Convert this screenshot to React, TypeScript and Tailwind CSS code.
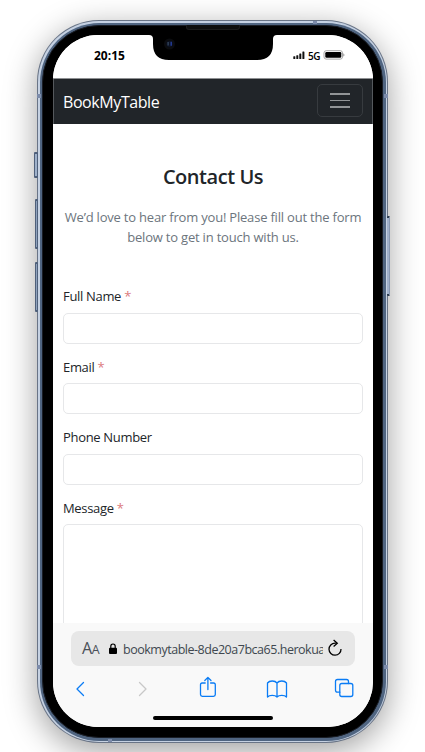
import type { ReactNode } from "react";

function Field({ label, required, tall }: { label: string; required?: boolean; tall?: boolean }) {
  return (
    <div className={tall ? "h-[180px] shrink-0" : "h-[70.6px] shrink-0"}>
      <label className="block h-[26.6px] text-[13px] leading-[20px] tracking-[-0.32px] text-[#212529]">
        {label}
        {required && <span className="text-[#dc7b7d]"> *</span>}
      </label>
      <div
        className={
          tall
            ? "h-[154px] rounded-[5px] border border-[#e6e7e9] bg-white"
            : "h-[31px] rounded-[5px] border border-[#e6e7e9] bg-white"
        }
      />
    </div>
  );
}

function StatusBar() {
  return (
    <div className="relative flex h-[44px] shrink-0 justify-between border-b border-[#8e9093] bg-white pr-[28px] pl-[41px]">
      <span className="mt-[11px] text-[12px] leading-[20px] font-bold tracking-[0px] text-black">20:15</span>
      <div className="mt-[10px] flex h-[20px] items-center">
        <svg width="13" height="9" viewBox="0 0 13 9" fill="#111">
          <rect x="0.3" y="5.3" width="2" height="2.7" rx=".5" />
          <rect x="3.3" y="4.2" width="2" height="3.8" rx=".5" />
          <rect x="6.3" y="2.5" width="2" height="5.5" rx=".5" />
          <rect x="9.4" y="0.6" width="2" height="7.4" rx=".5" />
        </svg>
        <span className="mt-px ml-[2px] w-[13px] text-[10px] leading-[20px] font-semibold tracking-[-0.5px] text-black">5G</span>
        <svg className="ml-[2px]" width="22" height="10" viewBox="0 0 22 10">
          <rect x="1" y=".7" width="18.5" height="8.4" rx="2.2" fill="#fff" stroke="#a5a5a5" />
          <rect x="2.3" y="2" width="16" height="5.8" rx="1.2" fill="#000" />
          <path d="M20.4 3.2c1.3.4 1.3 3 0 3.4z" fill="#888" />
        </svg>
      </div>
      <svg className="absolute top-[-1px] left-[96px]" width="128" height="26" viewBox="0 0 128 26">
        <path d="M0 0V1Q4 1 4 5V10Q4 26 20 26H108Q124 26 124 10V5Q124 1 128 1V0Z" fill="#000" />
        <circle cx="20.5" cy="10" r="5.5" fill="#0b0c0f" />
        <circle cx="20.5" cy="10" r="3" fill="#0b1225" />
        <path d="M19.1 8v3.5" stroke="#40566c" />
        <path d="M22.2 7.7v4" stroke="#253e9b" strokeWidth="1.4" />
      </svg>
    </div>
  );
}

function Stroke({ w, h, color, children }: { w: number; h: number; color: string; children: ReactNode }) {
  return (
    <svg
      width={w}
      height={h}
      viewBox={`0 0 ${w} ${h}`}
      fill="none"
      stroke={color}
      strokeWidth="1.3"
      strokeLinecap="round"
      strokeLinejoin="round"
    >
      {children}
    </svg>
  );
}

function BrowserBar() {
  return (
    <div className="flex h-[104px] shrink-0 flex-col bg-[#f9f9f9]">
      <div className="mt-[8px] ml-[18px] flex h-[35px] w-[284px] items-center rounded-[8px] bg-[#e7e7e7]">
        <span className="mt-px ml-[11px] w-[19px] text-[16px] leading-[20px] tracking-[-0.4px] text-[#4a5058]">
          A<span className="text-[12.500px]">A</span>
        </span>
        <svg className="ml-[8px]" width="8" height="12" viewBox="0 0 8 12">
          <path d="M1.8 5V3.2a2.2 2.2 0 0 1 4.4 0V5" fill="none" stroke="#000" strokeWidth="1.2" />
          <rect y="4.8" width="8" height="6.2" rx="1" fill="#000" />
        </svg>
        <span className="mt-[2px] ml-[6px] w-[200px] overflow-hidden text-[12.5px] leading-[20px] tracking-[-0.48px] whitespace-nowrap text-[#40474f]">
          bookmytable-8de20a7bca65.herokua
        </span>
        <svg className="mb-[2px] ml-[5px]" width="15" height="18" viewBox="0 0 15 18" fill="none" stroke="#000" strokeWidth="1.3">
          <path d="M8.8 4.2H7A6 6 0 1 0 13 10" />
          <path d="M5.6.9 9.3 4.2 5.6 7.5" />
        </svg>
      </div>
      <div className="mt-[10px] flex h-[24px] items-center justify-between pt-[2px] pr-[19px] pl-[22px]">
        <Stroke w={10} h={16} color="#0a7cf5">
          <path d="M8.500 1.500 2 8l6.500 6.500" />
        </Stroke>
        <div className="ml-[5px] translate-x-px">
          <Stroke w={10} h={16} color="#c8c8c8">
            <path d="m1.500 1.500 6.500 6.500-6.500 6.500" />
          </Stroke>
        </div>
        <div className="mb-[4px] ml-[3px] translate-x-px">
          <Stroke w={18} h={22} color="#0a7cf5">
            <path d="M6.200 7H3.200Q1.500 7 1.500 8.700V18.500Q1.500 20.300 3.300 20.300H14.500Q16.300 20.300 16.300 18.500V8.700Q16.300 7 14.600 7H11.600M8.900 13.500V1.500M5.800 4.500 8.900 1.400 12 4.500" />
          </Stroke>
        </div>
        <div className="ml-[2px] translate-x-px">
          <Stroke w={22} h={18} color="#0a7cf5">
            <path d="M11 3Q9.500 1 6.200 1 3 1 1.500 3V17Q3 15.300 6.200 15.300 9.500 15.300 11 17 12.500 15.300 15.800 15.300 19 15.300 20.500 17V3Q19 1 15.800 1 12.500 1 11 3V17" />
          </Stroke>
        </div>
        <div className="mb-[2px]">
          <Stroke w={20} h={20} color="#0a7cf5">
            <rect x="5.800" y="5.500" width="13" height="13" rx="2" />
            <path d="M5.800 14.200H3.500Q1.500 14.200 1.500 12.200V3.500Q1.500 1.500 3.500 1.500H12.500Q14.500 1.500 14.500 3.500V5.500" />
          </Stroke>
        </div>
      </div>
      <div className="mt-[16px] ml-[100px] h-[4px] w-[120px] rounded-full bg-black" />
    </div>
  );
}

export default function App() {
  return (
    <div className="relative h-[752px] w-[425px] overflow-hidden bg-white pt-[20px] pl-[37px] font-['Open_Sans','Noto_Sans',sans-serif]">
      <div className="relative h-[723px] w-[351px] rounded-[62px] bg-[#697486] p-px shadow-[0_8px_32px_rgba(0,0,0,0.38)]">
        <div className="absolute top-[132px] left-[-3px] h-[26px] w-[4px] rounded-[1px] border border-y-2 border-[#4f607a] bg-[#9fb1ca]" />
        <div className="absolute top-[179px] left-[-2px] h-[50px] w-[3px] rounded-[1px] border border-y-2 border-[#4f607a] bg-[#8fa2bd]" />
        <div className="absolute top-[242px] left-[-2px] h-[50px] w-[3px] rounded-[1px] border border-y-2 border-[#4f607a] bg-[#8fa2bd]" />
        <div className="absolute top-[196px] right-[-2px] h-[80px] w-[3px] rounded-[1px] border-y-2 border-r border-y-[#2c3c50] border-r-[#8797b0] bg-[#a0b0ca]" />
        <div className="h-full rounded-[61px] bg-[#c5d1e2] p-[1.500px]">
          <div className="h-full rounded-[59.500px] bg-[#506581] p-[2.500px]">
            <div className="h-full rounded-[57px] border border-[#1a1e26] bg-black px-[10px] pt-[9px] pb-[10px]">
              <div className="flex h-[692px] w-[320px] flex-col overflow-hidden rounded-[45px] bg-white">
                <StatusBar />
                <nav className="flex h-[45px] shrink-0 items-center justify-between border-x border-[#55595d] bg-[#212529] pr-[9px] pl-[9px]">
                  <span className="text-[16px] leading-[24px] tracking-[-0.42px] text-white">BookMyTable</span>
                  <div className="mb-[2px] flex h-[33px] w-[46px] flex-col items-center justify-center gap-[5px] rounded-[5px] border border-[#373b3f]">
                    <div className="h-[1.600px] w-[20px] bg-[#929597]" />
                    <div className="h-[1.600px] w-[20px] bg-[#929597]" />
                    <div className="h-[1.600px] w-[20px] bg-[#929597]" />
                  </div>
                </nav>
                <main className="flex h-[499px] shrink-0 flex-col overflow-hidden px-[10px]">
                  <h1 className="mt-[40px] text-center text-[20px] leading-[26px] font-semibold tracking-[-0.45px] text-[#212529]">
                    Contact Us
                  </h1>
                  <p className="mt-[17px] text-center text-[13px] leading-[20px] tracking-[-0.2px] whitespace-nowrap text-[#6c757d]">
                    We’d love to hear from you! Please fill out the form
                    <br />
                    below to get in touch with us.
                  </p>
                  <form className="mt-[39px] flex flex-col">
                    <Field label="Full Name" required />
                    <Field label="Email" required />
                    <Field label="Phone Number" />
                    <Field label="Message" required tall />
                  </form>
                </main>
                <BrowserBar />
              </div>
            </div>
          </div>
        </div>
        <div className="absolute top-[5px] left-[149px] h-[5px] w-[54px] rounded-b-[3px] border border-t-0 border-[#1b1c1c] bg-[#0d0e0e]" />
        <div className="absolute top-[74px] left-0 h-[4px] w-[4px] bg-[#7d8cab]" />
        <div className="absolute top-[74px] right-0 h-[4px] w-[4px] bg-[#7d8cab]" />
        <div className="absolute top-[645px] left-0 h-[4px] w-[4px] bg-[#7d8cab]" />
        <div className="absolute top-[645px] right-0 h-[4px] w-[4px] bg-[#7d8cab]" />
        <div className="absolute top-px left-[276px] h-[3px] w-[4px] bg-[#7d8cab]" />
        <div className="absolute bottom-px left-[71px] h-[3px] w-[4px] bg-[#7d8cab]" />
      </div>
    </div>
  );
}
